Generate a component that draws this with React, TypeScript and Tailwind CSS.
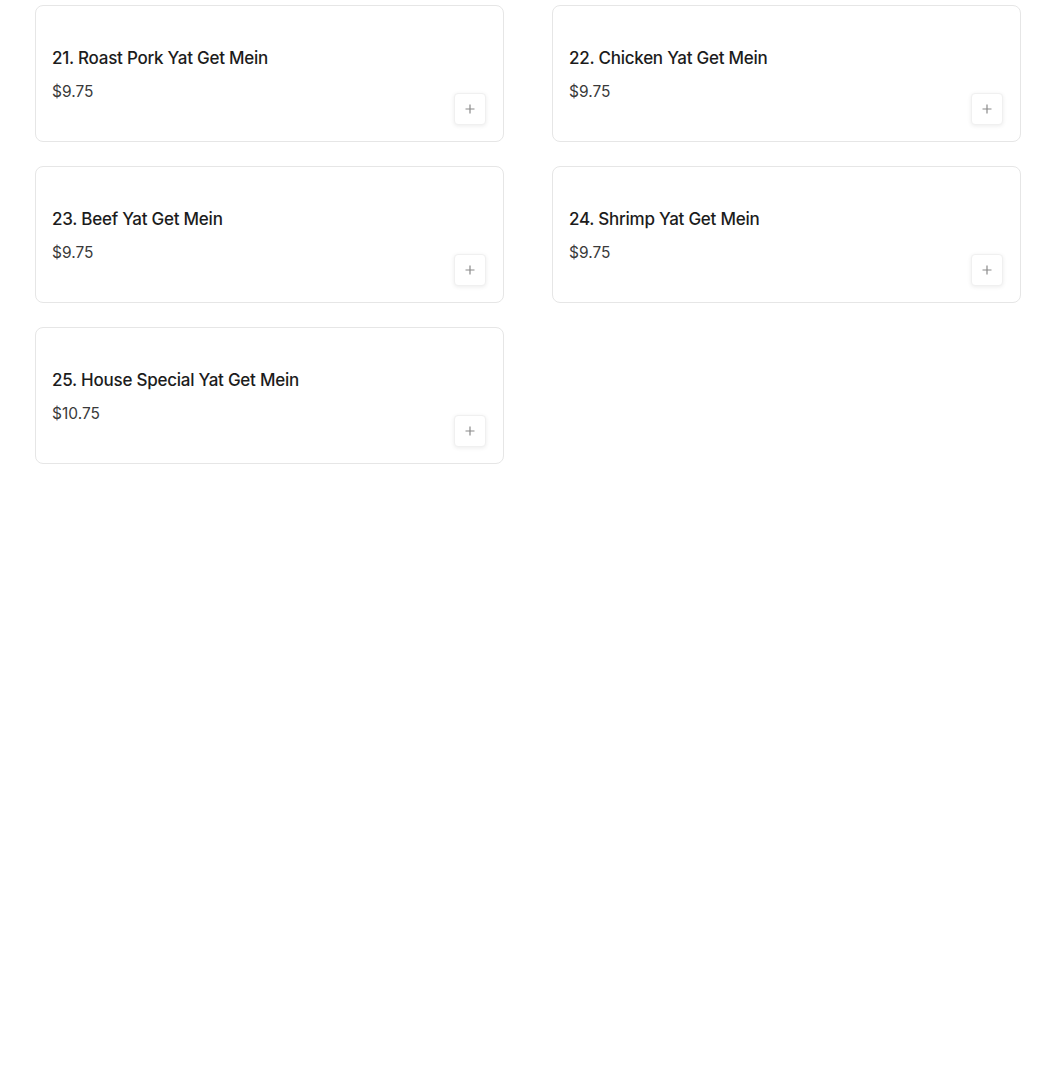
import React from 'react';

type MenuItem = { id: number; name: string; price: string };

const ITEMS: MenuItem[] = [
  { id: 21, name: 'Roast Pork Yat Get Mein', price: '$9.75' },
  { id: 22, name: 'Chicken Yat Get Mein', price: '$9.75' },
  { id: 23, name: 'Beef Yat Get Mein', price: '$9.75' },
  { id: 24, name: 'Shrimp Yat Get Mein', price: '$9.75' },
  { id: 25, name: 'House Special Yat Get Mein', price: '$10.75' },
];

const PlusIcon = () => (
  <svg width="10" height="10" viewBox="0 0 10 10" fill="none">
    <path d="M5 0.5v9M0.5 5h9" stroke="#8a8a8a" strokeWidth="1.2" />
  </svg>
);

const ItemCard: React.FC<{ item: MenuItem }> = ({ item }) => (
  <div className="h-[137px] rounded-lg border border-[#e6e6e6] bg-white pl-4 pr-[17px] pb-4 flex justify-between">
    <div className="pt-[40px]">
      <h3 className="text-[17px] leading-6 font-medium text-[#1c1c1c] tracking-[-0.25px]">
        {item.id}. {item.name}
      </h3>
      <p className="mt-[10px] text-[15.5px] leading-6 text-[#3a3a3a]">{item.price}</p>
    </div>
    <button
      className="self-end w-8 h-8 rounded border border-[#f0f0f0] bg-white shadow-[0_1px_4px_rgba(0,0,0,0.08)] flex items-center justify-center"
      aria-label={`Add ${item.name}`}
    >
      <PlusIcon />
    </button>
  </div>
);

const App: React.FC = () => {
  return (
    <div className="min-h-screen bg-white" style={{ fontFamily: 'Inter, "Noto Sans", sans-serif' }}>
      <div className="pl-[35px] pt-[5px] grid grid-cols-[469px_469px] gap-x-[48px] gap-y-[24px]">
        {ITEMS.map((item) => (
          <ItemCard key={item.id} item={item} />
        ))}
      </div>
    </div>
  );
};

export default App;
